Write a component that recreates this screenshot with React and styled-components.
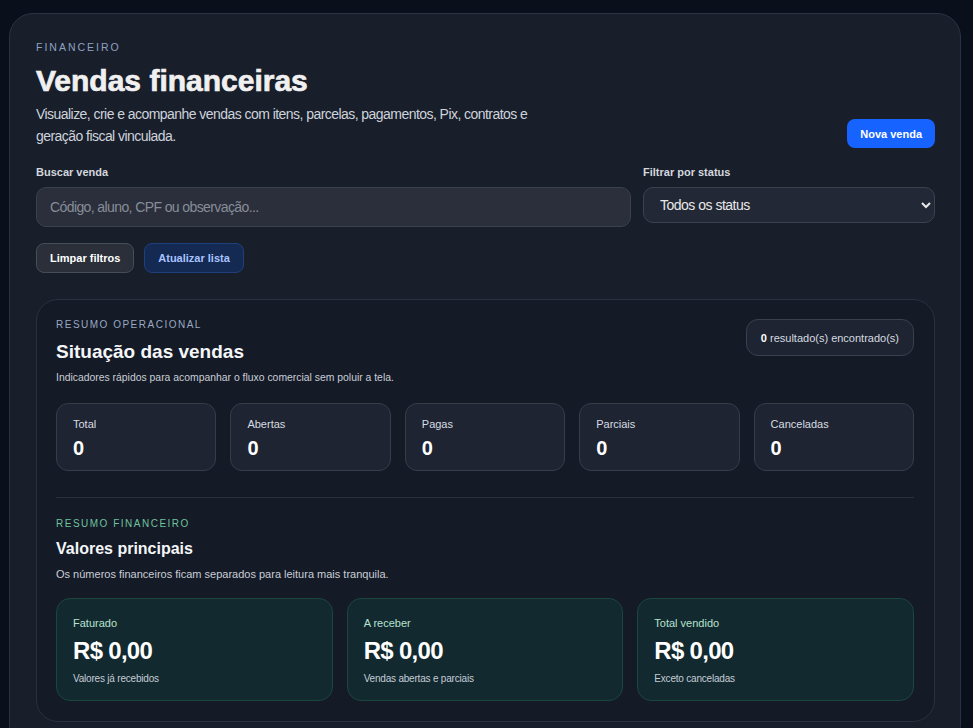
import React from "react";
import styled, { createGlobalStyle } from "styled-components";

const Global = createGlobalStyle`
  html, body { margin: 0; padding: 0; background: #0a101b; }
  body { font-family: "Liberation Sans", Arial, sans-serif; color: #e8ebf0; }
  * { box-sizing: border-box; }
`;

const Page = styled.div`
  padding: 13px 12px 20px 9px;
`;

const Panel = styled.section`
  background: #181e2a;
  border: 1px solid #2b3242;
  border-radius: 24px;
  padding: 26px 25px 26px 26px;
`;

const Header = styled.div`
  display: flex;
  justify-content: space-between;
  align-items: flex-end;
`;

const Eyebrow = styled.div`
  font-size: ${(p) => p.$size || "10.5px"};
  letter-spacing: ${(p) => p.$spacing || "2px"};
  color: ${(p) => p.$color || "#8fa1c2"};
  text-transform: uppercase;
  line-height: 14px;
  margin-top: ${(p) => p.$mt || "0"};
`;

const Title = styled.h1`
  margin: 9px 0 0;
  font-size: 30px;
  font-weight: 800;
  line-height: 36px;
  color: #f0f0f0;
  -webkit-text-stroke: 0.7px #f0f0f0;
`;

const Lead = styled.p`
  margin: 4px 0 0;
  font-size: 14px;
  line-height: 22px;
  letter-spacing: -0.55px;
  color: #cdd3dc;
  max-width: 520px;
`;

const PrimaryButton = styled.button`
  height: 29px;
  padding: 0 13px;
  border: none;
  border-radius: 8px;
  background: #1763ff;
  color: #fff;
  font: bold 11px "Liberation Sans", Arial, sans-serif;
  margin-bottom: -1px;
`;

const Filters = styled.div`
  display: grid;
  grid-template-columns: 1fr 292px;
  gap: 12px;
  margin-top: 19px;
`;

const Field = styled.label`
  display: flex;
  flex-direction: column;
  gap: 9px;
`;

const FieldLabel = styled.span`
  font-size: 11px;
  font-weight: bold;
  color: #d3d7de;
  line-height: 12px;
`;

const SearchInput = styled.input`
  height: 40px;
  border-radius: 10px;
  border: 1px solid #3b414d;
  background: #2a2f3b;
  color: #e6e6e6;
  padding: 0 13px;
  font: 14px "Liberation Sans", Arial, sans-serif;
  letter-spacing: -0.6px;
  outline: none;
  &::placeholder { color: #878d98; }
`;

const Select = styled.select`
  height: 36px;
  border-radius: 10px;
  border: 1px solid #3b414d;
  background: #222835;
  color: #e8e8e8;
  padding: 0 12px;
  font: 14px "Liberation Sans", Arial, sans-serif;
  letter-spacing: -0.5px;
  outline: none;
`;

const Actions = styled.div`
  display: flex;
  gap: 10px;
  margin-top: 16px;
`;

const GhostButton = styled.button`
  height: 30px;
  padding: 0 13px;
  border-radius: 8px;
  font: bold 11px "Liberation Sans", Arial, sans-serif;
  border: 1px solid ${(p) => (p.$accent ? "#1f3f7c" : "#464c58")};
  background: ${(p) => (p.$accent ? "#142a52" : "#2a2f3a")};
  color: ${(p) => (p.$accent ? "#a8c3ff" : "#ffffff")};
`;

const Card = styled.section`
  margin-top: 26px;
  background: #141a26;
  border: 1px solid #2a3040;
  border-radius: 22px;
  padding: 18px 20px 20px 19px;
`;

const CardHead = styled.div`
  display: flex;
  justify-content: space-between;
  align-items: flex-start;
`;

const SectionTitle = styled.h2`
  margin: ${(p) => p.$mt || "8px"} 0 0;
  font-size: ${(p) => p.$size || "19px"};
  font-weight: bold;
  line-height: 24px;
  color: #f5f6f8;
`;

const SectionText = styled.p`
  margin: ${(p) => p.$mt || "7px"} 0 0;
  font-size: ${(p) => p.$size || "11px"};
  line-height: 14px;
  color: #c9ced6;
`;

const Badge = styled.div`
  height: 37px;
  display: flex;
  align-items: center;
  padding: 0 14px;
  margin-top: 1px;
  border-radius: 12px;
  background: #1e2431;
  border: 1px solid #3a404c;
  font-size: 11px;
  color: #d6dae0;
  b { color: #fff; }
`;

const Stats = styled.div`
  display: grid;
  grid-template-columns: repeat(5, 1fr);
  gap: 14px;
  margin-top: 18px;
`;

const Stat = styled.div`
  height: 68px;
  border-radius: 12px;
  background: #1e2431;
  border: 1px solid #363c49;
  padding: 14px 16px;
`;

const StatLabel = styled.div`
  font-size: 11px;
  line-height: 13px;
  color: ${(p) => p.$color || "#d8dce2"};
`;

const StatValue = styled.div`
  margin-top: ${(p) => p.$mt || "6px"};
  font-size: ${(p) => p.$size || "20px"};
  font-weight: bold;
  line-height: ${(p) => p.$lh || "22px"};
  letter-spacing: ${(p) => p.$ls || "0"};
  color: #fff;
`;

const Divider = styled.hr`
  margin: 26px 0 0;
  border: none;
  border-top: 1px solid #2a303c;
`;

const Money = styled.div`
  display: grid;
  grid-template-columns: repeat(3, 1fr);
  gap: 14px;
  margin-top: 17px;
`;

const MoneyCard = styled.div`
  height: 103px;
  border-radius: 14px;
  background: #122930;
  border: 1px solid #1b463e;
  padding: 18px 16px;
`;

const MoneySub = styled.div`
  margin-top: 9px;
  font-size: 10px;
  line-height: 12px;
  letter-spacing: -0.2px;
  color: #c5ccd4;
`;

const stats = ["Total", "Abertas", "Pagas", "Parciais", "Canceladas"];
const money = [
  ["Faturado", "Valores já recebidos"],
  ["A receber", "Vendas abertas e parciais"],
  ["Total vendido", "Exceto canceladas"],
];

export default function App() {
  return (
    <Page>
      <Global />
      <Panel>
        <Header>
          <div>
            <Eyebrow>Financeiro</Eyebrow>
            <Title>Vendas financeiras</Title>
            <Lead>
              Visualize, crie e acompanhe vendas com itens, parcelas, pagamentos, Pix, contratos e
              geração fiscal vinculada.
            </Lead>
          </div>
          <PrimaryButton>Nova venda</PrimaryButton>
        </Header>

        <Filters>
          <Field>
            <FieldLabel>Buscar venda</FieldLabel>
            <SearchInput placeholder="Código, aluno, CPF ou observação..." />
          </Field>
          <Field>
            <FieldLabel>Filtrar por status</FieldLabel>
            <Select defaultValue="all">
              <option value="all">Todos os status</option>
            </Select>
          </Field>
        </Filters>

        <Actions>
          <GhostButton>Limpar filtros</GhostButton>
          <GhostButton $accent>Atualizar lista</GhostButton>
        </Actions>

        <Card>
          <CardHead>
            <div>
              <Eyebrow $size="10px" $spacing="1.5px" $color="#9aa9c3">Resumo operacional</Eyebrow>
              <SectionTitle>Situação das vendas</SectionTitle>
              <SectionText $size="10.4px">
                Indicadores rápidos para acompanhar o fluxo comercial sem poluir a tela.
              </SectionText>
            </div>
            <Badge>
              <span><b>0</b> resultado(s) encontrado(s)</span>
            </Badge>
          </CardHead>

          <Stats>
            {stats.map((s) => (
              <Stat key={s}>
                <StatLabel>{s}</StatLabel>
                <StatValue>0</StatValue>
              </Stat>
            ))}
          </Stats>

          <Divider />

          <Eyebrow $size="10px" $spacing="1.5px" $color="#6fc39d" $mt="19px">Resumo financeiro</Eyebrow>
          <SectionTitle $size="16px" $mt="6px">Valores principais</SectionTitle>
          <SectionText $mt="6px">Os números financeiros ficam separados para leitura mais tranquila.</SectionText>

          <Money>
            {money.map(([label, sub]) => (
              <MoneyCard key={label}>
                <StatLabel $color="#b8e2cf">{label}</StatLabel>
                <StatValue $size="24px" $lh="26px" $mt="8px" $ls="-0.7px">R$ 0,00</StatValue>
                <MoneySub>{sub}</MoneySub>
              </MoneyCard>
            ))}
          </Money>
        </Card>
      </Panel>
    </Page>
  );
}
